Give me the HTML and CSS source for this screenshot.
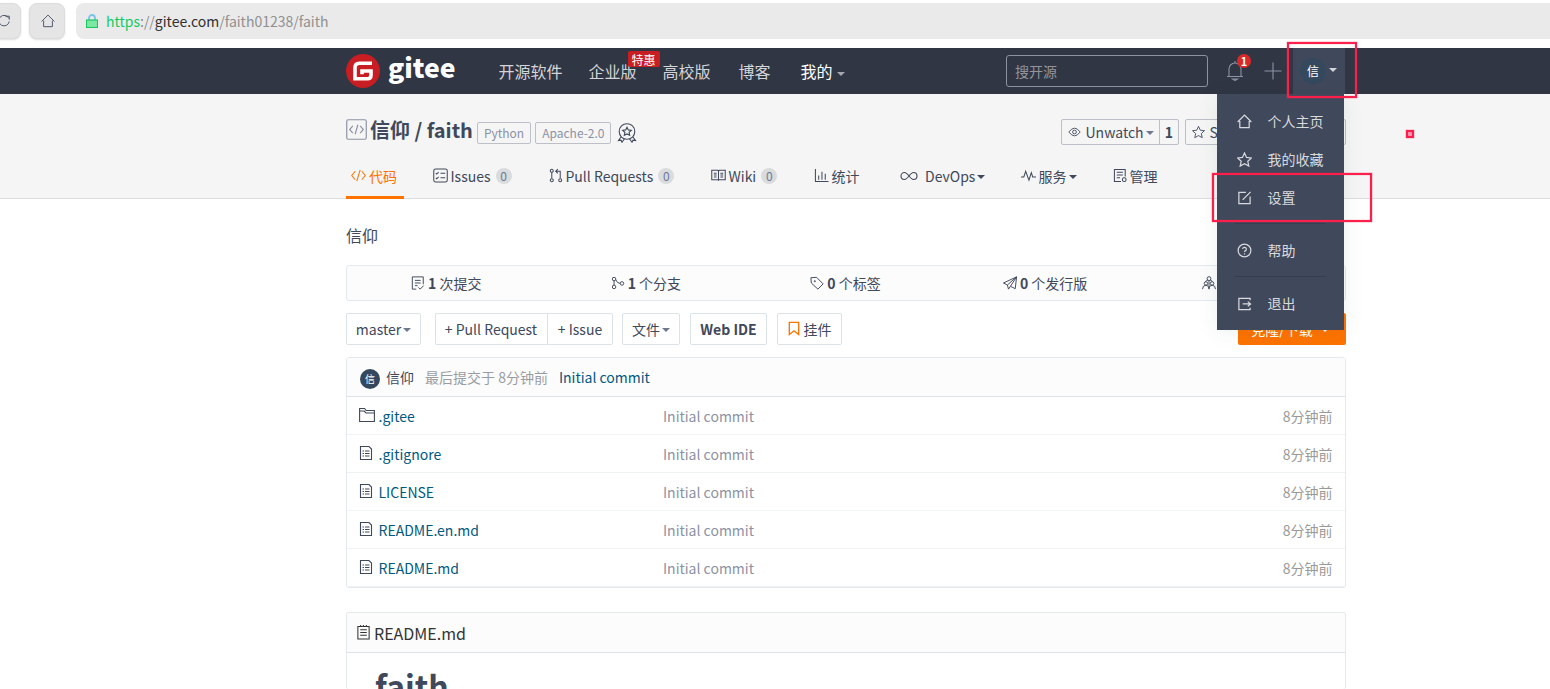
FILE: index.html
```html
<!DOCTYPE html>
<html lang="zh-CN">
<head>
    <meta charset="UTF-8">
    <meta name="viewport" content="width=device-width, initial-scale=1.0">
    <title>信仰/faith - Gitee</title>
    <link rel="stylesheet" href="styles.css">
</head>
<body>
    <svg class="defs">
        <symbol id="home" viewBox="0 0 16 16"><path d="M.7 8.500 8 1.200l7.300 7.300M3 7.500v7h10v-7"/></symbol>
        <symbol id="star" viewBox="0 0 16 16"><path d="M8 1l2.200 4.800 5.200.6-3.900 3.500 1.100 5.100L8 12.400 3.400 15l1.100-5.100L.6 6.400l5.200-.6z"/></symbol>
        <symbol id="code" viewBox="0 0 16 16"><path d="M4.500 3.500.8 8l3.700 4.500M11.500 3.500l3.700 4.500-3.700 4.500M9.800 2 6.200 14"/></symbol>
        <symbol id="file" viewBox="0 0 14 16"><path d="M1.500 1.500h8.500l2.500 2.500v10.500h-11zM3.500 6H5M6 6h4.500M3.500 8.500H5M6 8.500h4.500M3.500 11H5M6 11h4.500"/></symbol>
    </svg>

    <div class="browser">
        <span class="browser-btn reload"><svg viewBox="0 0 16 16"><path d="M13.500 5A6 6 0 1 0 14 8.500M9.500 2.500h4.500v4"/></svg></span>
        <span class="browser-btn"><svg><use href="#home"/></svg></span>
        <div class="url">
            <svg viewBox="0 0 12 14"><path class="shackle" d="M3 6V4a3 3 0 0 1 6 0v2"/><rect x=".5" y="6" width="11" height="7.500"/></svg>
            <span class="secure">https</span>://<span class="host">gitee.com</span>/faith01238/faith
        </div>
    </div>

    <nav class="navbar">
        <div class="container">
            <svg class="logo" viewBox="0 0 34 34"><circle cx="17" cy="17" r="17"/><path d="M26 9.300H13.500q-4.500 0-4.500 4.500V24.700h12.500q3.500 0 3.500-3.500V17H16v3.200"/></svg>
            <span class="brand">gitee</span>
            <div class="nav-links">
                <a>开源软件</a>
                <a>企业版<span class="promo">特惠</span></a>
                <a>高校版</a>
                <a>博客</a>
                <a class="mine">我的<i class="caret"></i></a>
            </div>
            <div class="search">搜开源</div>
            <div class="bell">
                <svg viewBox="0 0 18 20"><path d="M1 15.500h16M3 15.500V8a6 6 0 0 1 12 0v7.500M9 0v2M6.500 18h5l-2.500 1.500z"/></svg>
                <span class="bell-count">1</span>
            </div>
            <svg class="plus" viewBox="0 0 18 18"><path d="M9 .5v17M.5 9h17"/></svg>
            <div class="user">
                <span class="avatar">信</span><i class="caret"></i>
                <div class="dropdown">
                    <a><svg><use href="#home"/></svg>个人主页</a>
                    <a><svg><use href="#star"/></svg>我的收藏</a>
                    <a><svg viewBox="0 0 16 16"><path d="M9.500 2.500H2v12h12V7M6 10.500 14.500 2"/></svg>设置</a>
                    <hr>
                    <a><svg viewBox="0 0 16 16"><circle cx="8" cy="8" r="6.800"/><path d="M6 6.500a2 2 0 1 1 2.800 1.900Q8 8.800 8 9.700M8 11v1.300"/></svg>帮助</a>
                    <hr>
                    <a><svg viewBox="0 0 16 16"><path d="M14 4.500v-2H2v12h12v-2M6 8.500h8.500M11.500 6l3 2.500-3 2.500"/></svg>退出</a>
                </div>
            </div>
        </div>
    </nav>

    <header class="repo-header">
        <div class="container">
            <div class="title-row">
                <svg class="repo-icon" viewBox="0 0 20 20"><rect x=".7" y=".7" width="18.600" height="18.600" rx="1.500"/><path d="M6.500 6.500 3.500 10l3 3.500M13.500 6.500l3 3.500-3 3.500M11.300 5.500 8.700 14.500"/></svg>
                <h2>信仰 / faith</h2>
                <span class="label">Python</span>
                <span class="label">Apache-2.0</span>
                <svg class="medal" viewBox="0 0 20 20"><circle cx="10" cy="8.500" r="7.800"/><path d="M10 4.200l1.300 2.700 3 .4-2.200 2 .6 3L10 10.900l-2.700 1.400.6-3-2.200-2 3-.4zM4 14l-2.500 3.500 2.500-.3 1 2 2.500-3.500M16 14l2.500 3.500-2.500-.3-1 2-2.500-3.500"/></svg>
                <div class="actions">
                    <div class="action"><span><svg viewBox="0 0 16 16"><path d="M1 8q7-9.500 14 0-7 9.500-14 0z"/><circle cx="8" cy="8" r="2.300"/></svg>Unwatch<i class="caret"></i></span><b>1</b></div>
                    <div class="action star"><span><svg><use href="#star"/></svg>Star</span><b>0</b></div>
                </div>
            </div>
            <div class="tabs">
                <a class="active"><svg><use href="#code"/></svg>代码</a>
                <a><svg viewBox="0 0 16 16"><rect x=".8" y="1" width="14.400" height="14" rx="2"/><path d="M3 5.500l1 1 2-2M3 10.500l1 1 2-2M8 5.500h5M8 10.500h5"/></svg>Issues<span class="num">0</span></a>
                <a><svg class="pr" viewBox="0 0 14 16"><circle cx="2.500" cy="3" r="1.600"/><circle cx="2.500" cy="13" r="1.600"/><circle cx="11.500" cy="13" r="1.600"/><path d="M2.500 5v6M11.500 11V3.500H7M9 1.200 6.700 3.500 9 5.800"/></svg>Pull Requests<span class="num">0</span></a>
                <a><svg viewBox="0 0 16 16"><path d="M.8 2.500h6.400l.8.800.8-.8h6.400v10H.8zM8 3.500v10M3 5.500h3M3 7.500h3M3 9.500h3M10 5.500h3M10 7.500h3M10 9.500h3"/></svg>Wiki<span class="num">0</span></a>
                <a><svg viewBox="0 0 16 16"><path d="M1.500 1v13.500h14M5 8v4.500M8.500 4v8.500M12 6v6.500"/></svg>统计</a>
                <a><svg class="wide" viewBox="0 0 18 10"><path d="M9 5C7 2.500 6 1.500 4.500 1.500a3.500 3.500 0 0 0 0 7C6 8.500 7 7.500 9 5s3-3.500 4.500-3.500a3.500 3.500 0 0 1 0 7C12 8.500 11 7.500 9 5z"/></svg>DevOps<i class="caret"></i></a>
                <a><svg viewBox="0 0 16 16"><path d="M0 9.500h3l2-6 3.500 9.500 2.500-8 1.500 4.500H16"/></svg>服务<i class="caret"></i></a>
                <a><svg viewBox="0 0 16 16"><path d="M8.500 14.500H1.500v-13h11.500V9M4 4.500h6.500M4 7.500h6.500M4 10.500h3.500"/><circle cx="12" cy="12.500" r="2"/></svg>管理</a>
            </div>
        </div>
    </header>

    <main class="container">
        <div class="desc">信仰</div>
        <div class="stats">
            <span><svg viewBox="0 0 16 16"><path d="M6 15H1.500V1H14v8.500M4.500 5h6.500M4.500 8h6.500M4.500 11h3M8.500 13l2 2 4-4"/></svg><b>1</b> 次提交</span>
            <span><svg viewBox="0 0 16 16"><circle cx="3.500" cy="3.500" r="2"/><circle cx="3.500" cy="12.500" r="2"/><circle cx="12.500" cy="8.500" r="2"/><path d="M3.500 5.500v5M5.300 4Q7 8.500 10.500 8.500"/></svg><b>1</b> 个分支</span>
            <span><svg viewBox="0 0 16 16"><path d="M1 2 7.500 1.500l7.500 7.500-6 6L1.500 8z"/><circle cx="5.500" cy="6" r=".7"/></svg><b>0</b> 个标签</span>
            <span><svg viewBox="0 0 16 16"><path d="M15.500 1 .5 8l4.500 2.300L15.500 1 14 14.500l-5.500-2.700L6.300 15 5 10.300M8.500 11.800 15.500 1"/></svg><b>0</b> 个发行版</span>
            <span class="people"><svg viewBox="0 0 16 16"><circle cx="8" cy="3" r="2.200"/><circle cx="4.500" cy="8.500" r="2"/><circle cx="11.500" cy="8.500" r="2"/><path d="M4 6.500Q4.500 5 6.500 5M12 6.500Q11.500 5 9.500 5M8 5.500V12M.6 15q0-4.300 3.900-4.500Q8 10.700 8 15M8 15q0-4.300 3.500-4.500 3.900.2 3.900 4.500"/></svg><b>1</b> 位贡献者</span>
        </div>
        <div class="toolbar">
            <button class="branch">master<i class="caret"></i></button>
            <div class="group"><button>+ Pull Request</button><button>+ Issue</button></div>
            <button class="files">文件<i class="caret"></i></button>
            <button class="ide">Web IDE</button>
            <button class="widget"><svg viewBox="0 0 12 16"><path d="M1 1.500h10v13l-5-4-5 4z"/></svg>挂件</button>
            <button class="clone">克隆/下载<i class="caret"></i></button>
        </div>

        <div class="panel">
            <div class="last-commit">
                <span class="avatar">信</span>
                <span class="author">信仰</span>
                <span class="when">最后提交于 8分钟前</span>
                <a>Initial commit</a>
            </div>
            <div class="row"><svg class="folder" viewBox="0 0 16 16"><path d="M.6 14.500v-13h5l1.500 2h8.300v11zM.6 4h4.500L7 6h8.400"/></svg><a>.gitee</a><span>Initial commit</span><time>8分钟前</time></div>
            <div class="row"><svg><use href="#file"/></svg><a>.gitignore</a><span>Initial commit</span><time>8分钟前</time></div>
            <div class="row"><svg><use href="#file"/></svg><a>LICENSE</a><span>Initial commit</span><time>8分钟前</time></div>
            <div class="row"><svg><use href="#file"/></svg><a>README.en.md</a><span>Initial commit</span><time>8分钟前</time></div>
            <div class="row"><svg><use href="#file"/></svg><a>README.md</a><span>Initial commit</span><time>8分钟前</time></div>
        </div>

        <div class="panel readme">
            <div class="readme-title"><svg viewBox="0 0 16 16"><path d="M2 1.500h12v13.500H2zM4.500 5h7M4.500 8h7M4.500 11h7M5 0v2M8 0v2M11 0v2"/></svg>README.md</div>
            <h1>faith</h1>
        </div>
    </main>

    <div class="mark mark-user"></div>
    <div class="mark mark-settings"></div>
    <div class="mark mark-dot"></div>
</body>
</html>
```

FILE: styles.css
```css
* {
    box-sizing: border-box;
}

body {
    margin: 0;
    height: 689px;
    overflow: hidden;
    position: relative;
    background: #fff;
    color: #40485b;
    font: 14px/20px "Noto Sans CJK SC", sans-serif;
}

svg {
    width: 14px;
    height: 14px;
    flex: none;
    fill: none;
    stroke: currentColor;
    stroke-width: 1.1;
}

.defs {
    position: absolute;
    width: 0;
    height: 0;
}

.container {
    width: 1000px;
    margin-left: 346px;
}

.caret {
    display: inline-block;
    flex: none;
    margin-top: 1px;
    border: 4px solid transparent;
    border-top-color: currentColor;
    border-bottom: 0;
}

/* browser bar */
.browser {
    display: flex;
    height: 48px;
    padding-top: 3px;
}

.browser-btn {
    display: flex;
    align-items: center;
    justify-content: center;
    width: 36px;
    height: 36px;
    margin-right: 11px;
    border: 1px solid #dcdcdc;
    border-radius: 8px;
    background: #e5e5e5;
    box-shadow: 0 1px 2px #ddd;
    color: #4c566b;
}

.browser-btn svg {
    margin-left: 1px;
}

.reload {
    margin-left: -15px;
    margin-right: 8px;
}

.url {
    display: flex;
    align-items: center;
    flex: 1;
    height: 36px;
    padding-left: 10px;
    border-radius: 8px 0 0 8px;
    background: #eaeaea;
    color: #909090;
}

.url svg {
    width: 12px;
    margin-right: 8px;
    fill: #7be8a4;
    stroke: #1bc45d;
}

.url .shackle {
    fill: none;
    stroke: #78c5ec;
    stroke-width: 1.8;
}

.secure {
    color: #13ca62;
}

.host {
    color: #303030;
}

/* navbar */
.navbar {
    height: 46px;
    background: #303643;
}

.navbar .container {
    display: flex;
    align-items: center;
    height: 46px;
}

.logo {
    width: 34px;
    height: 34px;
    stroke: #fff;
    stroke-width: 3.6;
}

.logo circle {
    fill: #c71d23;
    stroke: none;
}

.brand {
    width: 111px;
    margin: -8px 0 0 8px;
    color: #fff;
    font-size: 26.5px;
    font-weight: 900;
}

.nav-links {
    display: flex;
    gap: 26px;
    width: 507px;
    color: #d4d5d8;
    font-size: 16px;
    line-height: 24px;
}

.nav-links a {
    position: relative;
    left: -.5px;
    white-space: nowrap;
}

.nav-links a:nth-child(4) {
    margin-left: 2px;
}

.nav-links .mine {
    margin-left: 4px;
    color: #fff;
}

.mine .caret {
    margin-left: 4px;
    vertical-align: 2px;
    color: #a4a7ad;
}

.promo {
    position: absolute;
    left: 39px;
    top: -8px;
    width: 32px;
    height: 16px;
    border-radius: 2px;
    background: #c71d23;
    color: #fff;
    font-size: 12px;
    line-height: 17px;
    text-align: center;
}

.search {
    width: 202px;
    height: 32px;
    padding: 6px 8px;
    border: 1px solid #8c92a0;
    border-radius: 3px;
    color: #93959b;
    line-height: 19px;
}

.bell {
    position: relative;
    width: 18px;
    height: 20px;
    margin-left: 18px;
    color: #8c92a4;
}

.bell svg {
    width: 18px;
    height: 20px;
}

.bell-count {
    position: absolute;
    left: 11px;
    top: -7px;
    width: 14px;
    height: 14px;
    border-radius: 50%;
    background: #db2828;
    color: #fff;
    font-size: 11px;
    font-weight: bold;
    line-height: 14px;
    text-align: center;
}

.plus {
    width: 18px;
    height: 18px;
    margin-left: 20px;
    color: #8c92a4;
}

.user {
    position: relative;
    display: flex;
    align-items: center;
    width: 52px;
    height: 46px;
    margin-left: 11px;
    padding-left: 7px;
    background: #40485b;
    color: #d4d5d8;
}

.user > .caret {
    margin: -2px 0 0 3px;
}

.avatar {
    width: 26px;
    height: 26px;
    border-radius: 50%;
    background: #34495e;
    color: #fff;
    font-size: 12px;
    line-height: 26px;
    text-align: center;
}

.dropdown {
    position: absolute;
    z-index: 5;
    top: 46px;
    right: 1px;
    width: 127px;
    height: 236px;
    padding-top: 9px;
    background: #40485b;
    box-shadow: 0 2px 20px rgba(0, 60, 60, .08);
    color: #d9dade;
}

.dropdown a {
    display: flex;
    align-items: center;
    height: 38px;
    padding: 0 0 2px 20px;
}

.dropdown svg {
    width: 15px;
    height: 15px;
    margin: 1px 15.5px 0 0;
    stroke-width: 1.3;
}

.dropdown hr {
    height: 1px;
    margin: 6px 18px 8px;
    border: 0;
    background: #373e4e;
}

/* repository header */
.repo-header {
    height: 105px;
    border-bottom: 1px solid #dcdddf;
    background: #f5f5f5;
}

.title-row {
    display: flex;
    align-items: center;
    height: 62px;
    padding-top: 14px;
}

.repo-icon {
    width: 21px;
    height: 21px;
    margin: -5px 3px 0 0;
    color: #8c92a4;
}

h2 {
    margin: -5px 4px 0 0;
    font-size: 20px;
    line-height: 28px;
}

.label {
    height: 22px;
    margin: 2px 4px 0 0;
    padding: 0 6px;
    border: 1px solid #bdc0c9;
    border-radius: 2px;
    color: #8c92a4;
    font-size: 12px;
    line-height: 20px;
}

.medal {
    width: 20px;
    height: 20px;
    margin: 1px 0 0 2px;
}

.actions {
    display: flex;
    gap: 6px;
    margin-left: auto;
}

.action {
    display: flex;
    width: 118px;
    height: 26px;
    border: 1px solid #bdc0c9;
    border-radius: 2px;
    line-height: 24px;
}

.action span {
    display: flex;
    align-items: center;
    flex: 1;
    padding-left: 6px;
    border-right: 1px solid #bdc0c9;
}

.action svg {
    width: 13px;
    margin: -1px 4.5px 0 0;
}

.action .caret {
    margin-left: 2px;
    color: #70798b;
}

.action b {
    width: 18px;
    text-align: center;
}

.star {
    width: 161px;
}

.tabs {
    display: grid;
    grid-template-columns: 87px 116px 162px 103px 86px 121px 92px 80px;
    height: 43px;
}

.tabs a {
    display: flex;
    align-items: center;
    height: 40px;
    white-space: nowrap;
}

.tabs svg {
    width: 15px;
    height: 15px;
    margin: -1px 2.5px 0 0;
}

.tabs a:last-child svg {
    margin-right: 1.5px;
}

.tabs .pr {
    width: 14px;
}

.tabs .wide {
    width: 18px;
    height: 10px;
    margin-right: 7px;
}

.tabs .caret {
    margin-left: 2px;
}

.tabs .active {
    width: 58px;
    height: 43px;
    padding-left: 5px;
    border-bottom: 3px solid #fe7300;
    color: #fe7300;
}

.tabs .active svg {
    margin-right: 3px;
}

.num {
    width: 16px;
    height: 16px;
    margin-left: 5px;
    border-radius: 50%;
    background: #d9dbdd;
    color: #6b7a99;
    font-size: 12px;
    line-height: 16px;
    text-align: center;
}

/* content */
.desc {
    padding: 24px 0 18px;
    font-size: 16px;
    line-height: 24px;
}

.stats {
    display: grid;
    grid-template-columns: repeat(5, 199.6px);
    height: 36px;
    border: 1px solid #e3e9ed;
    border-radius: 3px;
    background: #fcfcfc;
}

.stats span {
    display: flex;
    align-items: center;
    justify-content: center;
    padding-right: 1px;
    white-space: pre;
}

.stats svg {
    margin-right: 3px;
}

.toolbar {
    display: flex;
    height: 32px;
    margin: 12px 0;
}

button {
    display: flex;
    align-items: center;
    justify-content: center;
    height: 32px;
    padding: 0;
    border: 1px solid #dce3e8;
    border-radius: 2px;
    background: #fff;
    color: #40485b;
    font: inherit;
    white-space: nowrap;
}

button .caret {
    margin-left: 2px;
    color: #70798b;
}

.branch {
    width: 75px;
}

.group {
    display: flex;
    margin: 0 9px 0 14px;
}

.group button:first-child {
    width: 112px;
    padding-right: 1px;
    border-right: 0;
    border-radius: 2px 0 0 2px;
}

.group button:last-child {
    width: 66px;
    border-radius: 0 2px 2px 0;
}

.files {
    width: 58px;
}

.ide {
    width: 77px;
    margin: 0 10px;
    font-weight: bold;
}

.widget {
    width: 65px;
}

.widget svg {
    width: 12px;
    height: 15px;
    margin: -2px 4px 0 0;
    color: #fe7300;
    stroke-width: 1.4;
}

.clone {
    width: 108px;
    margin-left: auto;
    padding-right: 4px;
    border: 0;
    background: #fe7300;
    color: #fff;
}

.clone .caret {
    margin-left: 8px;
    color: #fff;
}

.panel {
    border: 1px solid #e3e9ed;
    border-radius: 3px;
}

.last-commit {
    display: flex;
    align-items: center;
    height: 39px;
    padding-left: 13px;
    border-bottom: 1px solid #dce3e8;
    background: #fcfcfc;
}

.last-commit .avatar {
    width: 20px;
    height: 20px;
    margin-top: 4px;
    font-size: 10px;
    line-height: 20px;
}

.author {
    margin: 0 11px 0 6px;
}

.when {
    margin-right: 11px;
    color: #9a9ca3;
}

.panel a {
    color: #005980;
}

.row {
    display: grid;
    grid-template-columns: 19.5px 284.5px 1fr auto;
    align-items: center;
    height: 38px;
    padding: 0 12.5px 0 12px;
    border-bottom: 1px solid #f0f3f6;
    color: #8c92a4;
}

.row svg {
    height: 16px;
    margin-top: -1px;
    color: #40485b;
}

.row .folder {
    width: 16px;
}

.row time {
    color: #999;
}

.readme {
    height: 77px;
    margin-top: 24px;
    border-bottom: 0;
    overflow: hidden;
}

.readme-title {
    display: flex;
    align-items: center;
    height: 40px;
    padding: 1px 0 0 9px;
    border-bottom: 1px solid #dce3e8;
    background: #fcfcfc;
    color: #333;
    font-size: 16px;
}

.readme-title svg {
    width: 15px;
    height: 15px;
    margin: -2px 3px 0 0;
}

h1 {
    margin: 12px 28px;
    font-size: 32px;
    line-height: 40px;
}

/* red marks drawn over the page */
.mark {
    position: absolute;
    z-index: 10;
    border: 2px solid #fb1f4c;
    box-shadow: 0 0 1px #fb1f4c, inset 0 0 1px #fb1f4c;
}

.mark-user {
    left: 1287px;
    top: 42px;
    width: 70px;
    height: 56px;
}

.mark-settings {
    left: 1212px;
    top: 173px;
    width: 160px;
    height: 49px;
}

.mark-dot {
    left: 1406px;
    top: 130px;
    width: 8px;
    height: 8px;
    background: #ff9db0;
}
```
